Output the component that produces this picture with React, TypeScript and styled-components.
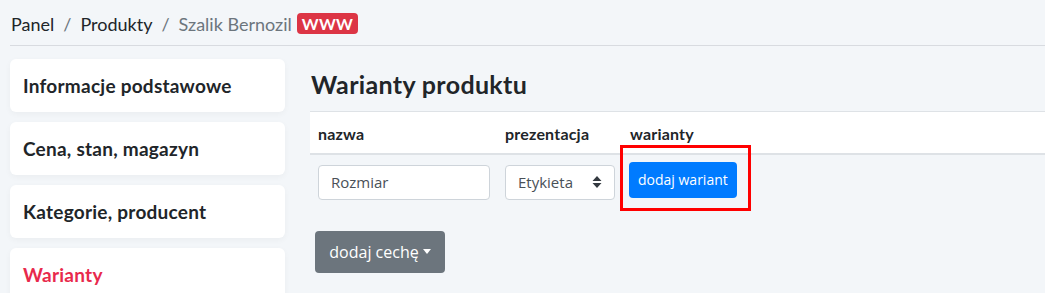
import styled, { createGlobalStyle } from 'styled-components'

const GlobalStyle = createGlobalStyle`
  html, body {
    margin: 0;
    padding: 0;
    background: #f3f6f9;
    font-family: Lato, "Open Sans", sans-serif;
    color: #212529;
    overflow: hidden;
  }
  * { box-sizing: border-box; }
`

const Page = styled.div`
  padding: 0 0 0 10px;
`

const Breadcrumb = styled.nav`
  display: flex;
  align-items: center;
  gap: 9px;
  height: 46px;
  padding: 2px 0 0 1px;
  font-size: 18px;
  border-bottom: 1px solid #d8dbe0;
`

const Crumb = styled.span<{ $current?: boolean }>`
  color: ${p => (p.$current ? '#6c757d' : '#212529')};
`

const Sep = styled.span`
  color: #6c757d;
`

const Badge = styled.span`
  background: #dc3545;
  color: #fff;
  font-weight: 700;
  font-size: 16px;
  letter-spacing: 0.3px;
  border-radius: 4px;
  padding: 1px 5px;
  margin-left: -4px;
`

const Layout = styled.div`
  display: grid;
  grid-template-columns: 275px 1fr;
  column-gap: 25px;
  padding-top: 13px;
`

const Side = styled.div`
  display: flex;
  flex-direction: column;
  gap: 10px;
`

const SideItem = styled.div<{ $active?: boolean }>`
  height: 53px;
  background: #fff;
  border-radius: 6px;
  display: flex;
  align-items: center;
  padding-left: 13px;
  font-size: 19px;
  letter-spacing: 0.25px;
  font-weight: 700;
  color: ${p => (p.$active ? '#e8294c' : '#212529')};
  box-shadow: 0 2px 6px rgba(0, 0, 0, 0.04);
`

const Main = styled.div`
  display: flex;
  flex-direction: column;
`

const Title = styled.h2`
  margin: 0;
  padding: 10px 0 0 1px;
  height: 52px;
  font-size: 25px;
  letter-spacing: 0.35px;
  font-weight: 700;
`

const Table = styled.table`
  border-collapse: collapse;
  table-layout: fixed;
  width: 100%;
`

const Th = styled.th<{ $w?: number }>`
  text-align: left;
  background: #fff;
  font-size: 16px;
  letter-spacing: 0.2px;
  font-weight: 700;
  height: 42px;
  padding: 3px 8px 0;
  border-top: 1px solid #dee2e6;
  border-bottom: 2px solid #dee2e6;
  width: ${p => (p.$w ? `${p.$w}px` : 'auto')};
`

const Td = styled.td`
  padding: 10px 8px 0;
  vertical-align: top;
  position: relative;
`

const Input = styled.div`
  width: 172px;
  height: 35px;
  border: 1px solid #ced4da;
  border-radius: 4px;
  background: #fff;
  padding: 0 12px;
  display: flex;
  align-items: center;
  font-family: "Open Sans", sans-serif;
  font-size: 15px;
  color: #495057;
`

const Select = styled(Input)`
  width: 110px;
  justify-content: space-between;
`

const BlueButton = styled.button`
  margin: -3px 0 0 -1px;
  background: #007bff;
  color: #fff;
  border: 0;
  border-radius: 4px;
  height: 36px;
  padding: 0 9px;
  font-family: "Open Sans", sans-serif;
  font-size: 14px;
`

const Highlight = styled.span`
  position: absolute;
  left: -2px;
  top: -10px;
  width: 131px;
  height: 66px;
  border: 3px solid #ff0000;
  pointer-events: none;
`

const GrayButton = styled.button`
  align-self: flex-start;
  margin: 31px 0 0 5px;
  background: #6c757d;
  color: #fff;
  border: 0;
  border-radius: 4px;
  height: 42px;
  width: 130px;
  font-family: "Open Sans", sans-serif;
  font-size: 16px;
  display: flex;
  align-items: center;
  justify-content: center;
  gap: 4px;
`

const Caret = styled.span`
  width: 0;
  height: 0;
  border-left: 4px solid transparent;
  border-right: 4px solid transparent;
  border-top: 5px solid #fff;
`

const Arrows = () => (
  <svg width="10" height="14" viewBox="0 0 10 14">
    <path d="M5 1 L9.5 6 L0.5 6 Z M5 13 L0.5 8 L9.5 8 Z" fill="#343a40" />
  </svg>
)

export default function App() {
  return (
    <Page>
      <GlobalStyle />
      <Breadcrumb>
        <Crumb>Panel</Crumb>
        <Sep>/</Sep>
        <Crumb>Produkty</Crumb>
        <Sep>/</Sep>
        <Crumb $current>Szalik Bernozil</Crumb>
        <Badge>WWW</Badge>
      </Breadcrumb>
      <Layout>
        <Side>
          <SideItem>Informacje podstawowe</SideItem>
          <SideItem>Cena, stan, magazyn</SideItem>
          <SideItem>Kategorie, producent</SideItem>
          <SideItem $active>Warianty</SideItem>
        </Side>
        <Main>
          <Title>Warianty produktu</Title>
          <Table>
            <thead>
              <tr>
                <Th $w={187}>nazwa</Th>
                <Th $w={125}>prezentacja</Th>
                <Th>warianty</Th>
              </tr>
            </thead>
            <tbody>
              <tr>
                <Td><Input>Rozmiar</Input></Td>
                <Td><Select>Etykieta <Arrows /></Select></Td>
                <Td>
                  <BlueButton>dodaj wariant</BlueButton>
                  <Highlight />
                </Td>
              </tr>
            </tbody>
          </Table>
          <GrayButton>dodaj cechę <Caret /></GrayButton>
        </Main>
      </Layout>
    </Page>
  )
}
